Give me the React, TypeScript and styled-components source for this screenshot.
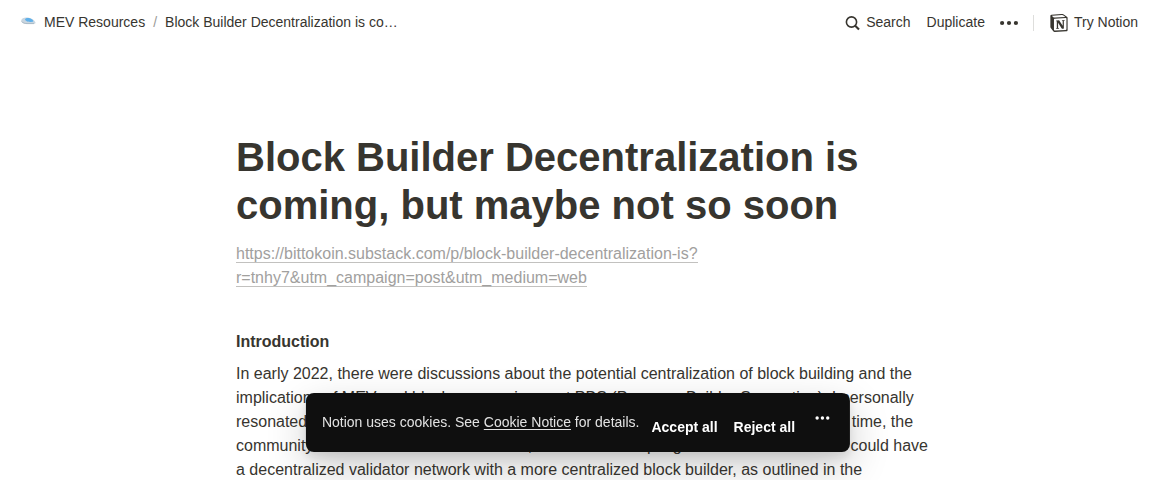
import React from "react";
import styled, { createGlobalStyle } from "styled-components";

const GlobalStyle = createGlobalStyle`
  * { box-sizing: border-box; }
  html, body { margin: 0; background: #fff; }
  body {
    height: 100vh;
    overflow: hidden;
    color: #37352f;
    font-family: "Liberation Sans", Arial, sans-serif;
    font-size: 16px;
    line-height: 24px;
  }
`;

const Topbar = styled.header`
  display: flex;
  align-items: center;
  justify-content: space-between;
  height: 44px;
  padding: 0 10px 0 12px;
  font-size: 14px;
  line-height: 20px;
`;

const Group = styled.nav`
  display: flex;
  align-items: center;
`;

const Crumb = styled.a`
  display: flex;
  align-items: center;
  gap: 6px;
  padding: 0 8px;
  color: inherit;
  text-decoration: none;
  white-space: nowrap;
`;

const CrumbLabel = styled.span`
  max-width: 240px;
  overflow: hidden;
  text-overflow: ellipsis;
`;

const Slash = styled.span`
  color: #9b9a97;
`;

const BarButton = styled.button`
  display: flex;
  align-items: center;
  gap: 6px;
  height: 28px;
  padding: 0 8px;
  border: 0;
  background: none;
  color: inherit;
  font: inherit;
  white-space: nowrap;
  cursor: pointer;

  svg { margin-top: 2px; }
`;

const Divider = styled.span`
  width: 1px;
  height: 16px;
  margin: 2px 8px 0 7px;
  background: #dededc;
`;

const MenuButton = styled(BarButton)`
  padding-left: 7px;
`;

const Page = styled.main`
  max-width: 900px;
  margin: 0 auto;
  padding: 89px 96px 0 108px;
`;

const Title = styled.h1`
  margin: 0;
  font-size: 40px;
  line-height: 48px;
  font-weight: 700;
`;

const Source = styled.p`
  margin: 13px 0 0;
`;

const SourceLink = styled.a`
  color: #a1a09e;
  text-decoration: none;
  border-bottom: 1px solid #c2c1bf;
`;

const Heading = styled.p`
  margin: 40px 0 0;
  font-weight: 700;
`;

const Paragraph = styled.p`
  margin: 8px 0 0;
`;

const Banner = styled.aside`
  position: fixed;
  bottom: 28px;
  left: 50%;
  transform: translateX(-50%);
  display: flex;
  align-items: flex-start;
  max-width: calc(100% - 32px);
  padding: 16px 20px 11px 16px;
  border-radius: 8px;
  background: #0f0f0f;
  color: #e3e3e3;
  box-shadow: 0 5px 10px rgba(15, 15, 15, 0.1), 0 15px 40px rgba(15, 15, 15, 0.2);
  font-size: 14px;
  line-height: 26px;
  white-space: nowrap;
`;

const NoticeLink = styled.a`
  color: inherit;
  text-decoration: underline;
  text-underline-offset: 2px;
`;

const Choices = styled.div`
  display: flex;
  gap: 16px;
  margin: 4px 0 0 12px;
`;

const Choice = styled.button`
  padding: 0;
  border: 0;
  background: none;
  color: #fff;
  font: inherit;
  font-weight: 700;
  line-height: 28px;
  cursor: pointer;
`;

const MoreButton = styled.button`
  display: flex;
  margin: 2px 0 0 20px;
  padding: 0;
  border: 0;
  background: none;
  color: #fff;
  cursor: pointer;
`;

const CloudIcon = () => (
  <svg width="18" height="18" viewBox="0 0 18 18" aria-hidden="true">
    <path d="M1.200 7.500C1.500 5.200 4.500 4 8 4.500c3.500.5 6.500 2.700 7.400 4.800.4 1.200-.4 1.700-1.700 1.700H7C3.800 11 1.100 9.800 1.200 7.500z" fill="#c9d6e0" />
    <path d="M5 6.200c.8-1.600 4.800-1.500 6.800 0 1.400 1.100 1.900 2.100 1.100 2.600-2 .4-7.600.1-7.900-2.600z" fill="#5fb0ea" />
    <path d="M1.600 8.600c1.200 1.300 3.400 2 5.400 2h7" stroke="#a3b2bf" strokeWidth=".8" fill="none" />
  </svg>
);

const SearchIcon = () => (
  <svg width="16" height="16" viewBox="0 0 16 16" fill="none" stroke="currentColor" aria-hidden="true">
    <circle cx="7.500" cy="7" r="5.100" strokeWidth="1.600" />
    <path d="M11.200 10.700 15 14.500" strokeWidth="2.100" />
  </svg>
);

const DotsIcon = () => (
  <svg width="18" height="18" viewBox="0 0 18 18" fill="currentColor" aria-hidden="true">
    <circle cx="2.100" cy="9" r="2.100" />
    <circle cx="9" cy="9" r="2.100" />
    <circle cx="15.900" cy="9" r="2.100" />
  </svg>
);

const SmallDotsIcon = () => (
  <svg width="15" height="14" viewBox="0 0 15 14" fill="currentColor" aria-hidden="true">
    <circle cx="2.200" cy="7" r="1.700" />
    <circle cx="7.500" cy="7" r="1.700" />
    <circle cx="12.800" cy="7" r="1.700" />
  </svg>
);

const NotionIcon = () => (
  <svg width="18" height="18" viewBox="0 0 120 126" aria-hidden="true">
    <path fill="currentColor" d="M20.700 21.900c3.900 3.200 5.400 3 12.700 2.500l69.200-4.200c1.500 0 .2-1.500-.2-1.600L90.900 10.300c-2.200-1.700-5.100-3.700-10.800-3.200l-67 4.900c-2.400.2-2.900 1.500-2 2.400zm4.100 16.100v72.800c0 3.900 2 5.400 6.300 5.100l76.100-4.400c4.400-.2 4.900-2.900 4.900-6.100V33.100c0-3.200-1.200-4.900-3.900-4.600l-79.500 4.600c-2.900.3-3.900 1.700-3.900 4.900zm75.100 3.900c.5 2.200 0 4.400-2.200 4.700l-3.700.7v53.800c-3.200 1.700-6.100 2.700-8.500 2.700-3.900 0-4.900-1.200-7.800-4.900L53.800 61.300v36.400l7.600 1.700s0 4.400-6.100 4.400l-16.800 1c-.5-1 0-3.400 1.700-3.900l4.400-1.200V51.600l-6.100-.5c-.5-2.200.7-5.400 4.200-5.600l18.100-1.200 24.900 38V48.700l-6.300-.7c-.5-2.700 1.500-4.700 3.900-4.900zM7.300 5.200 77 .1c8.600-.7 10.800-.2 16.100 3.700l22.200 15.600c3.700 2.700 4.900 3.400 4.900 6.300v85.800c0 5.400-2 8.500-8.800 9l-81 4.900c-5.100.2-7.600-.5-10.300-3.900L3.700 100.200C.7 96.300-.5 93.400-.5 89.900V13.700c0-4.400 2-8 7.800-8.500z" />
  </svg>
);

export default function App() {
  return (
    <>
      <GlobalStyle />
      <Topbar>
        <Group aria-label="Breadcrumb">
          <Crumb href="#resources"><CloudIcon />MEV Resources</Crumb>
          <Slash>/</Slash>
          <Crumb href="#article">
            <CrumbLabel>Block Builder Decentralization is coming, but maybe not so soon</CrumbLabel>
          </Crumb>
        </Group>
        <Group aria-label="Page actions">
          <BarButton type="button"><SearchIcon />Search</BarButton>
          <BarButton type="button">Duplicate</BarButton>
          <MenuButton type="button" aria-label="More options"><DotsIcon /></MenuButton>
          <Divider />
          <BarButton type="button"><NotionIcon />Try Notion</BarButton>
        </Group>
      </Topbar>
      <Page>
        <Title>Block Builder Decentralization is coming, but maybe not so soon</Title>
        <Source>
          <SourceLink href="#source">
            https://bittokoin.substack.com/p/block-builder-decentralization-is?<br />
            r=tnhy7&amp;utm_campaign=post&amp;utm_medium=web
          </SourceLink>
        </Source>
        <Heading>Introduction</Heading>
        <Paragraph>
          In early 2022, there were discussions about the potential centralization of block building and the
          implications of MEV and block sequencing post PBS (Proposer Builder Separation). I personally
          resonated with Vitalik Buterin’s “Endgame” article on the block production. At the same time, the
          community was soon in a consensus that, and we are adopting this model in which we could have
          a decentralized validator network with a more centralized block builder, as outlined in the
        </Paragraph>
      </Page>
      <Banner aria-label="Cookie notice">
        <span>Notion uses cookies. See <NoticeLink href="#cookies">Cookie Notice</NoticeLink> for details.</span>
        <Choices>
          <Choice type="button">Accept all</Choice>
          <Choice type="button">Reject all</Choice>
        </Choices>
        <MoreButton type="button" aria-label="More cookie options"><SmallDotsIcon /></MoreButton>
      </Banner>
    </>
  );
}
